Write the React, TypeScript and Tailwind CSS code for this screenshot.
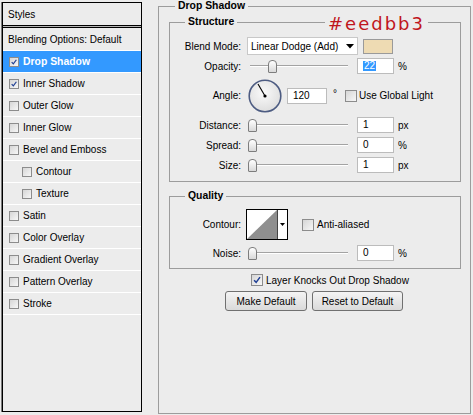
import React from 'react';

const Tick = ({ size }: { size: number }) => (
    <svg width={size} height={size} viewBox="0 0 12 12" className="absolute left-0 top-0">
        <path d="M2.5 6.2 L5 8.8 L9.6 2.6" fill="none" stroke="#1f3f94" strokeWidth="1.8" />
    </svg>
);

const Check = ({ checked = false, size = 10 }: { checked?: boolean; size?: number }) => (
    <span
        className="relative inline-block shrink-0 border border-[#8c8c8c] bg-linear-to-br from-[#d6d6d6] to-[#f7f7f7]"
        style={{ width: size, height: size }}
    >
        {checked && <Tick size={size - 2} />}
    </span>
);

const styleRows = [
    { name: 'Drop Shadow', checked: true, active: true },
    { name: 'Inner Shadow', checked: true },
    { name: 'Outer Glow' },
    { name: 'Inner Glow' },
    { name: 'Bevel and Emboss' },
    { name: 'Contour', sub: true },
    { name: 'Texture', sub: true },
    { name: 'Satin' },
    { name: 'Color Overlay' },
    { name: 'Gradient Overlay' },
    { name: 'Pattern Overlay' },
    { name: 'Stroke' },
];

const Slider = ({ at = 0 }: { at?: number }) => (
    <div className="relative ml-[7px] flex h-[20px] w-[100px] items-center">
        <div className="ml-[2px] h-[2px] w-[98px] border-t border-[#a3a3a3] border-b border-b-white" />
        <div
            className="absolute top-[4px] h-[13px] w-[9px] rounded-t-[4px] rounded-b-[1px] border border-[#7d7d7d] bg-linear-to-b from-white to-[#d9d9d9]"
            style={{ left: at }}
        />
    </div>
);

const Field = ({ value, w = 37 }: { value: React.ReactNode; w?: number }) => (
    <div
        className="flex h-[16px] items-center border border-[#bcbcbc] bg-white pl-[5px] leading-none"
        style={{ width: w }}
    >
        {value}
    </div>
);

const Label = ({ children }: { children: React.ReactNode }) => (
    <div className="w-[71px] shrink-0 text-right">{children}</div>
);

const SliderRow = ({ label, value, unit, at = 0 }: { label: string; value: React.ReactNode; unit: string; at?: number }) => (
    <div className="flex h-[20px] items-center">
        <Label>{label}</Label>
        <Slider at={at} />
        <div className="ml-[9px]">
            <Field value={value} />
        </div>
        <span className="ml-[4px]">{unit}</span>
    </div>
);

export default function App() {
    return (
        <div className="relative flex h-[415px] w-[473px] bg-[#ececec] font-['Liberation_Sans',Arial,sans-serif] text-[10px] text-black">
            {/* layer style list */}
            <div className="ml-[2px] mt-[2px] h-[410px] w-[140px] shrink-0 border border-black shadow-[-1px_0_0_#7a7a7a]">
                <div className="flex h-[22px] items-center pl-[5px]">Styles</div>
                <div className="h-[3px] border-y border-black bg-[#b4b4b4]" />
                <div className="flex h-[23px] items-center border-b border-white pl-[5px]">Blending Options: Default</div>
                {styleRows.map((r) => (
                    <div
                        key={r.name}
                        className={
                            'flex h-[22px] items-center border-b border-white ' +
                            (r.active ? 'bg-[#3399ff] text-[10.4px] font-bold text-white' : '')
                        }
                    >
                        <span className={r.sub ? 'ml-[19px] flex' : 'ml-[6px] flex'}>
                            <Check checked={r.checked} />
                        </span>
                        <span className="ml-[4px]">{r.name}</span>
                    </div>
                ))}
            </div>

            {/* drop shadow settings */}
            <fieldset className="ml-[16px] h-[414px] w-[313px] shrink-0 border border-[#9c9c9c]">
                <legend className="ml-[16px] px-[3px] text-[10.4px] font-bold leading-[12px]">Drop Shadow</legend>

                <fieldset className="ml-[10px] mt-[4px] w-[292px] border border-[#9c9c9c] pt-[8px] pb-[6px]">
                    <legend className="ml-[15px] px-[3px] text-[10.4px] font-bold leading-[12px]">Structure</legend>

                    <div className="flex h-[20px] items-center">
                        <Label>Blend Mode:</Label>
                        <div className="ml-[6px] flex h-[18px] w-[111px] items-center justify-between border border-[#c8c8c8] bg-white pl-[3px] pr-[3px]">
                            <span>Linear Dodge (Add)</span>
                            <svg width="8" height="5" viewBox="0 0 8 5">
                                <path d="M0 0 H8 L4 4.5 Z" fill="#000" />
                            </svg>
                        </div>
                        <div className="ml-[5px] h-[15px] w-[30px] border border-[#9a9a9a] bg-[#eedbb3]" />
                    </div>

                    <SliderRow
                        label="Opacity:"
                        at={20}
                        unit="%"
                        value={<span className="bg-[#3399ff] px-[1px] text-white">22</span>}
                    />

                    <div className="flex h-[39px] items-center">
                        <Label>Angle:</Label>
                        <svg width="34" height="34" viewBox="0 0 34 34" className="ml-[7px]">
                            <defs>
                                <radialGradient id="dial" cx="0.45" cy="0.4" r="0.6">
                                    <stop offset="0" stopColor="#fafafa" />
                                    <stop offset="1" stopColor="#dedede" />
                                </radialGradient>
                            </defs>
                            <circle cx="17" cy="17" r="15.8" fill="url(#dial)" stroke="#4d5c82" strokeWidth="1.6" />
                            <line x1="17" y1="17" x2="10" y2="5" stroke="#000" strokeWidth="1.1" />
                            <circle cx="17" cy="17" r="1.6" fill="#000" />
                        </svg>
                        <div className="ml-[5px]">
                            <Field value="120" w={40} />
                        </div>
                        <span className="ml-[6px] w-[12px] self-start pt-[10px]">°</span>
                        <Check size={12} />
                        <span className="ml-[2px]">Use Global Light</span>
                    </div>

                    <SliderRow label="Distance:" value="1" unit="px" />
                    <SliderRow label="Spread:" value="0" unit="%" />
                    <SliderRow label="Size:" value="1" unit="px" />
                </fieldset>

                <fieldset className="ml-[10px] mt-[8px] w-[292px] border border-[#9c9c9c] pt-[7px] pb-[5px]">
                    <legend className="ml-[15px] px-[3px] text-[10.4px] font-bold leading-[12px]">Quality</legend>

                    <div className="flex h-[31px] items-center">
                        <Label>Contour:</Label>
                        <svg width="42" height="31" viewBox="0 0 42 31" className="ml-[5px]">
                            <rect x="0.5" y="0.5" width="41" height="30" fill="#fff" stroke="#000" />
                            <polygon points="1,30 31,1 31,30" fill="#8f8f8f" />
                            <line x1="31.5" y1="1" x2="31.5" y2="30" stroke="#444" />
                            <polygon points="34,14 39,14 36.5,17" fill="#000" />
                        </svg>
                        <span className="ml-[14px] flex">
                            <Check size={12} />
                        </span>
                        <span className="ml-[3px]">Anti-aliased</span>
                    </div>

                    <div className="mt-[3px]">
                        <SliderRow label="Noise:" value="0" unit="%" />
                    </div>
                </fieldset>

                <div className="ml-[92px] mt-[1px] flex h-[20px] items-center">
                    <Check checked size={12} />
                    <span className="ml-[3px]">Layer Knocks Out Drop Shadow</span>
                </div>

                <div className="ml-[66px] mt-[1px] flex gap-[5px]">
                    <button className="h-[20px] w-[82px] rounded-[3px] border border-[#707070] bg-linear-to-b from-[#f4f4f4] to-[#dadada] text-[10px]">
                        Make Default
                    </button>
                    <button className="h-[20px] w-[91px] rounded-[3px] border border-[#707070] bg-linear-to-b from-[#f4f4f4] to-[#dadada] text-[10px]">
                        Reset to Default
                    </button>
                </div>
            </fieldset>

            {/* colour annotation laid over the panel */}
            <div className="absolute left-[325px] top-[13px] bg-[#ececec] px-[3px] font-['DejaVu_Sans',sans-serif] text-[18px] leading-[21px] tracking-[2px] text-[#c0161c]">
                #eedbb3
            </div>
        </div>
    );
}
